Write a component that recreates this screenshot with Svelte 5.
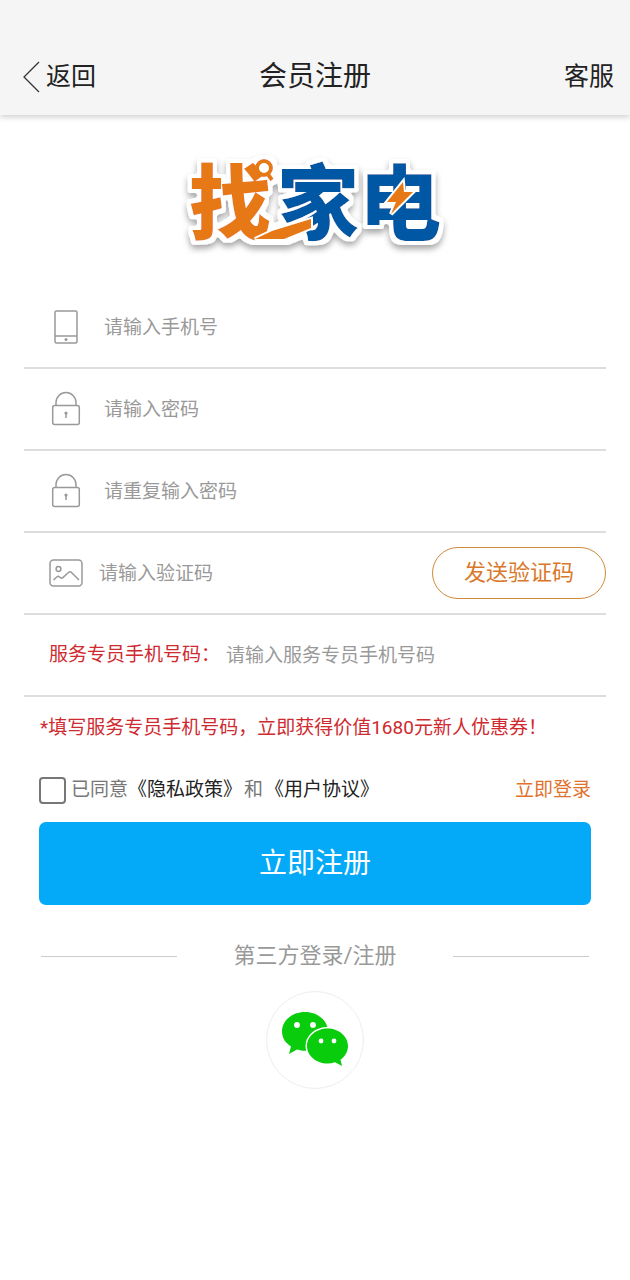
<script lang="ts">
	let phone = $state('');
	let password = $state('');
	let passwordAgain = $state('');
	let code = $state('');
	let agentPhone = $state('');
	let agreed = $state(false);

	function submit(event: SubmitEvent) {
		event.preventDefault();
	}
</script>

{#snippet lockIcon()}
	<svg class="icon" viewBox="0 0 34 36" aria-hidden="true">
		<rect x="3.7" y="14.5" width="26.6" height="19" rx="2" />
		<path d="M7 14.5V11.5a10 10 0 0 1 20 0V14.5" />
		<circle class="solid" cx="17" cy="22" r="1.6" />
		<path d="M17 22v5" />
	</svg>
{/snippet}

<header>
	<a class="back" href="#back">
		<svg viewBox="0 0 18 32" aria-hidden="true">
			<path d="M17 1L2 16l15 15" />
		</svg>
		<span>返回</span>
	</a>
	<h1>会员注册</h1>
	<a class="service" href="#service">客服</a>
</header>

<main>
	<svg class="logo" viewBox="0 0 280 110" role="img" aria-label="找家电">
		<!-- white outline and soft shadow around the whole wordmark -->
		<filter id="halo" x="-5%" y="-10%" width="110%" height="125%">
			<feMorphology in="SourceAlpha" operator="dilate" radius="4" result="fat" />
			<feGaussianBlur in="fat" stdDeviation="0.8" result="soft" />
			<feComponentTransfer in="soft" result="outline">
				<feFuncR type="linear" slope="0" intercept="1" />
				<feFuncG type="linear" slope="0" intercept="1" />
				<feFuncB type="linear" slope="0" intercept="1" />
				<feFuncA type="linear" slope="3" intercept="-1" />
			</feComponentTransfer>
			<feDropShadow in="outline" dx="0" dy="4" stdDeviation="3" flood-opacity="0.35" result="shadow" />
			<feMerge>
				<feMergeNode in="shadow" />
				<feMergeNode in="SourceGraphic" />
			</feMerge>
		</filter>
		<g filter="url(#halo)">
			<text y="83">
				<tspan class="orange" x="14">找</tspan><tspan class="blue" x="102">家</tspan><tspan
					class="blue"
					x="184">电</tspan
				>
			</text>
			<path class="swoosh" d="M80 89h29l27-11v-9l-39 12z" />
			<circle class="lens" cx="89" cy="18" r="7" />
			<path class="handle" d="M92 23l5 7" />
			<path class="bolt" d="M228 32l-16 20h9l-5 12 22-22h-9z" />
		</g>
	</svg>

	<form onsubmit={submit}>
		<label class="row">
			<svg class="icon" viewBox="0 0 34 36" aria-hidden="true">
				<rect x="6" y="2" width="22" height="32" rx="1.5" />
				<path d="M6 27h22" />
				<circle class="solid" cx="17" cy="30.5" r="1.5" />
			</svg>
			<input type="tel" aria-label="手机号" placeholder="请输入手机号" bind:value={phone} />
		</label>
		<label class="row">
			{@render lockIcon()}
			<input type="password" aria-label="密码" placeholder="请输入密码" bind:value={password} />
		</label>
		<label class="row">
			{@render lockIcon()}
			<input
				type="password"
				aria-label="重复密码"
				placeholder="请重复输入密码"
				bind:value={passwordAgain}
			/>
		</label>
		<div class="row code">
			<svg class="icon" viewBox="0 0 34 36" aria-hidden="true">
				<rect x="1" y="5" width="32" height="26" rx="3.5" />
				<circle cx="9.5" cy="14" r="2.4" />
				<path d="M4.5 25l3.500-3.200q1.200-1 2.400 0l1 .9q1.200 1 2.400-.1L19.500 17.500q1.500-1.400 3 0L30 25" />
			</svg>
			<input type="text" aria-label="验证码" placeholder="请输入验证码" bind:value={code} />
			<button type="button" class="send">发送验证码</button>
		</div>
		<div class="row agent">
			<label for="agent-phone">服务专员手机号码：</label>
			<input
				id="agent-phone"
				type="tel"
				placeholder="请输入服务专员手机号码"
				bind:value={agentPhone}
			/>
		</div>

		<p class="notice">*填写服务专员手机号码，立即获得价值1680元新人优惠券！</p>

		<div class="terms">
			<input id="agree" type="checkbox" bind:checked={agreed} />
			<label for="agree">已同意</label>
			<a href="#privacy">《隐私政策》</a>
			<span>和</span>
			<a href="#agreement">《用户协议》</a>
			<a class="login" href="#login">立即登录</a>
		</div>

		<button type="submit" class="submit">立即注册</button>
	</form>

	<div class="third">
		<span>第三方登录/注册</span>
	</div>

	<button type="button" class="wechat" aria-label="微信登录">
		<svg viewBox="0 0 68 56" aria-hidden="true">
			<path
				d="M24 1C11 1 1 9.500 1 20.500c0 6.500 3.500 11.500 9 15L8 43l8-4.500c3 .9 5.500 1.200 8.500 1.200C37 39.700 47 31 47 20.500S37 1 24 1z"
			/>
			<path
				class="front"
				d="M46.500 17.500C35 17.500 26 25.500 26 35s9 17.500 20.500 17.500c2.500 0 5-.4 7.500-1.200L61 55l-1.500-6.200C64 45.500 67 40.500 67 35c0-9.500-9-17.500-20.500-17.500z"
			/>
			<g class="eyes">
				<circle cx="16" cy="14" r="2.900" />
				<circle cx="32" cy="14" r="2.900" />
				<circle cx="40" cy="30" r="2.400" />
				<circle cx="53" cy="30" r="2.400" />
			</g>
		</svg>
	</button>
</main>

<style>
	:global(body) {
		background: #fff;
		font-family: Roboto, 'Noto Sans CJK SC', sans-serif;
		font-size: 19px;
		line-height: 28px;
		color: #222;
	}

	a {
		color: inherit;
		text-decoration: none;
	}

	button,
	input {
		font-family: inherit;
	}

	button {
		line-height: 28px;
		cursor: pointer;
	}

	header {
		display: grid;
		grid-template-columns: 1fr auto 1fr;
		align-items: center;
		height: 77px;
		padding: 38px 16px 0;
		background: #f5f5f5;
		box-shadow: 0 2px 6px rgba(0, 0, 0, 0.2);
	}

	h1 {
		margin: 0;
		font-size: 28px;
		font-weight: 400;
	}

	.back {
		display: flex;
		align-items: center;
		gap: 6px;
		padding-left: 6px;
		font-size: 25px;
	}

	.back svg {
		width: 18px;
		height: 32px;
		fill: none;
		stroke: #333;
		stroke-width: 1.3;
	}

	.service {
		justify-self: end;
		font-size: 25px;
	}

	main {
		padding: 35px 24px 40px;
	}

	.logo {
		display: block;
		width: 280px;
		height: 110px;
		margin: 0 auto 27px;
		overflow: visible;
	}

	.logo text {
		font-family: 'Noto Sans CJK SC', sans-serif;
		font-size: 82px;
		font-weight: 900;
	}

	.orange {
		fill: #e67817;
	}

	.blue {
		fill: #0459a4;
	}

	.swoosh,
	.bolt {
		fill: #e67817;
		stroke: #fff;
		stroke-width: 4;
		paint-order: stroke;
	}

	.lens {
		fill: #fff;
		stroke: #e67817;
		stroke-width: 4;
	}

	.handle {
		stroke: #e67817;
		stroke-width: 4;
	}

	.row {
		display: flex;
		align-items: center;
		gap: 21px;
		height: 80px;
		padding-left: 25px;
		border-bottom: 2px solid #ddd;
	}

	.row.code {
		gap: 16px;
	}

	.row.agent {
		gap: 6px;
	}

	.agent label {
		color: #cf2a30;
	}

	.icon {
		flex: none;
		width: 34px;
		height: 36px;
		fill: none;
		stroke: #999;
		stroke-width: 1.5;
	}

	.icon .solid {
		fill: #999;
		stroke: none;
	}

	.row input {
		flex: 1;
		min-width: 0;
		padding: 0;
		border: 0;
		outline: 0;
		background: none;
		font-size: 19px;
		color: #222;
	}

	.row input::placeholder {
		color: #999;
		opacity: 1;
	}

	.send {
		width: 174px;
		height: 52px;
		padding: 0;
		border: 1px solid #d08a3c;
		border-radius: 26px;
		background: #fff;
		font-size: 22px;
		color: #d9782b;
	}

	.notice {
		margin: 17px 0 0;
		padding-left: 16px;
		color: #cf2a30;
	}

	.terms {
		display: flex;
		align-items: center;
		height: 28px;
		margin: 34px 15px 18px;
		color: #777;
	}

	.terms input {
		appearance: none;
		box-sizing: border-box;
		width: 27px;
		height: 27px;
		margin: 0 5px 0 0;
		border: 2px solid #777;
		border-radius: 4px;
		background: #fff;
	}

	.terms input:checked {
		background: #04a9f8;
	}

	.terms a {
		color: #222;
	}

	.terms span {
		margin: 0 2px;
	}

	.terms .login {
		margin-left: auto;
		color: #e0722b;
	}

	.submit {
		display: block;
		width: calc(100% - 30px);
		height: 83px;
		margin: 0 15px;
		border: 0;
		border-radius: 7px;
		background: #04a9f8;
		font-size: 28px;
		color: #fff;
	}

	.third {
		display: flex;
		align-items: center;
		gap: 56px;
		margin: 36px 17px 20px;
		font-size: 22px;
		line-height: 30px;
		color: #999;
	}

	.third::before,
	.third::after {
		content: '';
		flex: 1;
		height: 1px;
		background: #ccc;
	}

	.wechat {
		display: flex;
		align-items: center;
		justify-content: center;
		width: 98px;
		height: 98px;
		margin: 0 auto;
		padding: 0 0 2px;
		border: 1px solid #eee;
		border-radius: 50%;
		background: #fff;
	}

	.wechat svg {
		width: 68px;
		height: 56px;
		fill: #08cc0c;
	}

	.wechat .front {
		stroke: #fff;
		stroke-width: 3;
		paint-order: stroke;
	}

	.eyes {
		fill: #fff;
	}
</style>
